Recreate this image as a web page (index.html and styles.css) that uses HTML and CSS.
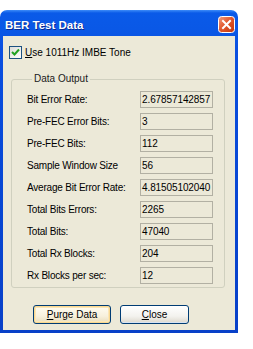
FILE: index.html
```html
<!DOCTYPE html>
<html lang="en">
<head>
    <meta charset="UTF-8">
    <meta name="viewport" content="width=device-width, initial-scale=1.0">
    <title>BER Test Data</title>
    <link rel="stylesheet" href="styles.css">
</head>
<body>
    <div class="window">
        <div class="titlebar">
            <span class="title">BER Test Data</span>
            <button class="btn-close" title="Close">
                <svg width="17" height="17" viewBox="0 0 17 17">
                    <defs>
                        <linearGradient id="redFill" x1="0" y1="0" x2="1" y2="1">
                            <stop offset="0" stop-color="#f2a083"/>
                            <stop offset="0.45" stop-color="#e2592f"/>
                            <stop offset="1" stop-color="#c2350c"/>
                        </linearGradient>
                    </defs>
                    <rect x="0.5" y="0.5" width="16" height="16" rx="3" fill="url(#redFill)" stroke="#ffffff"/>
                    <path d="M5 5 L12 12 M12 5 L5 12" stroke="#ffffff" stroke-width="2" stroke-linecap="square"/>
                </svg>
            </button>
        </div>

        <div class="content">
            <label class="check-row">
                <span class="checkbox">
                    <svg width="11" height="11" viewBox="0 0 11 11">
                        <path d="M2 5 L4.5 7.5 L9 2.5" fill="none" stroke="#21a121" stroke-width="2"/>
                    </svg>
                </span>
                <span><u>U</u>se 1011Hz IMBE Tone</span>
            </label>

            <fieldset class="group">
                <legend>Data Output</legend>
                <div class="row">
                    <span class="label">Bit Error Rate:</span>
                    <span class="value">2.67857142857</span>
                </div>
                <div class="row">
                    <span class="label">Pre-FEC Error Bits:</span>
                    <span class="value">3</span>
                </div>
                <div class="row">
                    <span class="label">Pre-FEC Bits:</span>
                    <span class="value">112</span>
                </div>
                <div class="row">
                    <span class="label">Sample Window Size</span>
                    <span class="value">56</span>
                </div>
                <div class="row">
                    <span class="label">Average Bit Error Rate:</span>
                    <span class="value">4.81505102040</span>
                </div>
                <div class="row">
                    <span class="label">Total Bits Errors:</span>
                    <span class="value">2265</span>
                </div>
                <div class="row">
                    <span class="label">Total Bits:</span>
                    <span class="value">47040</span>
                </div>
                <div class="row">
                    <span class="label">Total Rx Blocks:</span>
                    <span class="value">204</span>
                </div>
                <div class="row">
                    <span class="label">Rx Blocks per sec:</span>
                    <span class="value">12</span>
                </div>
            </fieldset>

            <div class="buttons">
                <button class="btn btn-default"><u>P</u>urge Data</button>
                <button class="btn btn-close-dlg"><u>C</u>lose</button>
            </div>
        </div>
    </div>
</body>
</html>
```

FILE: styles.css
```css
:root {
    --frame-blue: #0a4fe0;
    --dialog-bg: #ece9d8;
    --group-border: #d0d0bf;
    --edit-border: #b2b0a3;
    --button-border: #003c74;
}

* {
    margin: 0;
    padding: 0;
    box-sizing: border-box;
    font-family: 'Liberation Sans', Arial, sans-serif;
}

body {
    background-color: #ffffff;
    color: #000;
    font-size: 10px;
}

.window {
    width: 238px;
    margin-top: 10px;
    padding: 0 3px 3px;
    border-radius: 7px 7px 0 0;
    background: linear-gradient(#3d8cf8 0, #0a5ae8 3px, #0a58e6 20px, var(--frame-blue) 40px, #0840c8 100%);
}

.titlebar {
    height: 26px;
    display: flex;
    align-items: center;
    justify-content: space-between;
    padding: 3px 0 0 2px;
}

.title {
    color: #ffffff;
    font-size: 11.5px;
    font-weight: bold;
    text-shadow: 1px 1px 0 #0a2a90;
}

.btn-close {
    width: 17px;
    height: 17px;
    border: none;
    background: none;
    display: block;
    line-height: 0;
}

.content {
    height: 294px;
    background-color: var(--dialog-bg);
    padding-top: 10px;
}

.check-row {
    display: flex;
    align-items: center;
    gap: 3px;
    height: 13px;
    padding-left: 6px;
    font-size: 10px;
}

.checkbox {
    width: 13px;
    height: 13px;
    border: 1px solid #1c5180;
    background: linear-gradient(135deg, #dcdcd7, #ffffff);
    display: flex;
    align-items: center;
    justify-content: center;
}

.group {
    margin: 14px 10px 0 8px;
    border: 1px solid var(--group-border);
    border-radius: 3px;
    padding: 6px 11px 3px 15px;
    display: flex;
    flex-direction: column;
    gap: 5px;
}

.group legend {
    margin-left: 5px;
    padding: 0 2px;
    font-size: 10px;
    line-height: 12px;
    color: #1a1a1a;
}

.row {
    display: flex;
    align-items: center;
    justify-content: space-between;
    height: 17px;
}

.label {
    letter-spacing: -0.2px;
}

.value {
    width: 73px;
    height: 17px;
    border: 1px solid var(--edit-border);
    padding-left: 1px;
    line-height: 15px;
    letter-spacing: -0.1px;
    white-space: nowrap;
    overflow: hidden;
}

.buttons {
    display: flex;
    gap: 9px;
    margin-top: 17px;
    padding-left: 30px;
}

.btn {
    height: 19px;
    border: 1px solid var(--button-border);
    border-radius: 3px;
    background: linear-gradient(#ffffff, #f3f2ee 60%, #dcd8cd);
    font-size: 10px;
    color: #000;
}

.btn-default {
    width: 78px;
    box-shadow: inset 0 0 0 1px #f9d891, inset 0 0 0 2px #fbe7b7;
    background: linear-gradient(#fffdf3, #f7f0dc 60%, #e8dcba);
}

.btn-close-dlg {
    width: 69px;
    box-shadow: inset 0 -1px 0 #d6e2f2;
}
```
